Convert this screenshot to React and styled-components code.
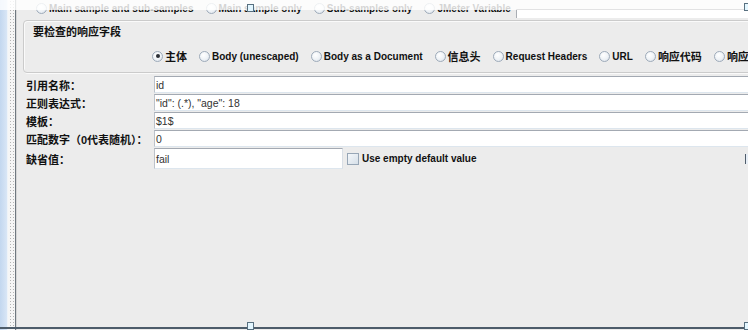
import React from "react";
import styled, { createGlobalStyle } from "styled-components";

const GlobalStyle = createGlobalStyle`
  html, body { margin: 0; padding: 0; width: 748px; height: 330px; overflow: hidden; background: #ececec; }
  #root { width: 748px; height: 330px; }
`;

const FONT = `"Liberation Sans", "Noto Sans CJK SC", sans-serif`;

const Screen = styled.div`
  position: relative;
  display: flex;
  width: 748px;
  height: 330px;
  overflow: hidden;
  background: #ececec;
  font-family: ${FONT};
  color: #111;
`;

const BlueStrip = styled.div`
  flex: none;
  width: 7px;
  background: linear-gradient(to right, #c3d7ef, #d9e6f6);
  border-right: 1px solid #eef3f9;
`;

const DotStrip = styled.div`
  flex: none;
  width: 7px;
  background-color: #f6f6f6;
  background-image: radial-gradient(#b5b5b5 0.7px, transparent 0.9px);
  background-size: 3px 3px;
  background-position: 1px 0;
`;

const DarkLine = styled.div`
  flex: none;
  width: 1px;
  background: #6f7880;
  border-right: 1px solid #d6d6d6;
`;

const Panel = styled.div`
  flex: 1;
  min-width: 0;
  display: flex;
  flex-direction: column;
  overflow: hidden;
`;

const ApplyRow = styled.div`
  display: flex;
  align-items: center;
  height: 18px;
  padding: 0 0 2px 19px;
  box-sizing: border-box;
  gap: 12px;
  white-space: nowrap;
`;

const RadioItem = styled.label`
  display: flex;
  align-items: center;
  gap: 2px;
  font-size: ${(p) => (p.$cjk ? "11px" : "10px")};
  font-weight: bold;
  white-space: nowrap;
  flex: none;
`;

const RadioDot = styled.span`
  position: relative;
  flex: none;
  width: 11px;
  height: 11px;
  box-sizing: border-box;
  border-radius: 50%;
  border: 1px solid #9eabba;
  background: radial-gradient(circle at 40% 35%, #ffffff 0%, #eef2f6 55%, #d3dbe4 100%);
  &::after {
    content: "";
    display: ${(p) => (p.$on ? "block" : "none")};
    position: absolute;
    left: 2.5px;
    top: 2.5px;
    width: 4px;
    height: 4px;
    border-radius: 50%;
    background: #2b2f36;
  }
`;

const VarField = styled.div`
  flex: 1;
  align-self: flex-end;
  height: 8px;
  margin: 0 -6px -2px -7px;
  background: #fff;
  border-top: 1px solid #5d6166;
  border-left: 1px solid #a9adb3;
`;

const GroupBox = styled.fieldset`
  margin: 2px -20px 0 6px;
  padding: 5px 0 0 9px;
  height: 53px;
  box-sizing: border-box;
  border: 1px solid #cbcbcb;
  border-radius: 4px;
  box-shadow: inset 1px 1px 0 #fafafa, 1px 1px 0 #fafafa;
  min-width: 0;
`;

const GroupTitle = styled.div`
  font-size: 11px;
  font-weight: bold;
  line-height: 12px;
  height: 12px;
`;

const ChoiceRow = styled.div`
  display: flex;
  align-items: center;
  gap: 12px;
  margin-top: 11px;
  padding-left: 119px;
  height: 14px;
`;

const Form = styled.div`
  display: flex;
  flex-direction: column;
  gap: 1px;
  margin-top: 3px;
  padding-left: 9px;
`;

const Row = styled.div`
  display: flex;
  align-items: center;
  height: ${(p) => p.$h || 17}px;
`;

const Label = styled.div`
  flex: none;
  width: 128px;
  font-size: 11px;
  font-weight: bold;
  white-space: nowrap;
`;

const Field = styled.div`
  flex: ${(p) => (p.$w ? "none" : "1")};
  width: ${(p) => (p.$w ? `${p.$w}px` : "auto")};
  height: 100%;
  box-sizing: border-box;
  margin-right: ${(p) => (p.$w ? "0" : "-6px")};
  background: #fff;
  border-top: 1px solid #a3a9b2;
  border-left: 1px solid #bcc2ca;
  border-right: 1px solid #d9dfe6;
  border-bottom: 1px solid #dde6ee;
  padding-left: 1px;
  display: flex;
  align-items: center;
  font-size: 10.5px;
  color: #333;
  white-space: nowrap;
`;

const CheckBox = styled.span`
  flex: none;
  width: 12px;
  height: 12px;
  box-sizing: border-box;
  margin-left: 4px;
  border: 1px solid #97a6b6;
  background: linear-gradient(135deg, #f4f7fa, #d6dfe8);
`;

const CheckLabel = styled.span`
  margin-left: 3px;
  font-size: 10px;
  font-weight: bold;
  white-space: nowrap;
`;

const EdgeBit = styled.span`
  margin-left: auto;
  margin-right: -1px;
  width: 3px;
  height: 10px;
  border-left: 1px solid #4f5d6b;
  background: #e7eef6;
`;

const TopVeil = styled.div`
  position: absolute;
  left: 0;
  top: 0;
  width: 100%;
  height: 10px;
  background: rgba(255, 255, 255, 0.82);
`;

const BottomEdge = styled.div`
  position: absolute;
  left: 0;
  bottom: 1px;
  width: 100%;
  height: 2px;
  background: #4d5c6a;
`;

const Handle = styled.div`
  position: absolute;
  left: ${(p) => p.$x}px;
  top: ${(p) => p.$y}px;
  width: 7px;
  height: 8px;
  box-sizing: border-box;
  border: 1px solid #587080;
  background: #e3f6ff;
`;

const applyOptions = [
  "Main sample and sub-samples",
  "Main sample only",
  "Sub-samples only",
  "JMeter Variable",
];

const fieldOptions = [
  { t: "主体", cjk: true, on: true },
  { t: "Body (unescaped)" },
  { t: "Body as a Document" },
  { t: "信息头", cjk: true },
  { t: "Request Headers" },
  { t: "URL" },
  { t: "响应代码", cjk: true },
  { t: "响应信息", cjk: true },
];

const rows = [
  { label: "引用名称：", value: "id" },
  { label: "正则表达式：", value: '"id": (.*), "age": 18' },
  { label: "模板：", value: "$1$" },
  { label: "匹配数字（0代表随机）：", value: "0" },
];

export default function App() {
  return (
    <Screen>
      <GlobalStyle />
      <BlueStrip />
      <DotStrip />
      <DarkLine />
      <Panel>
        <ApplyRow>
          {applyOptions.map((o) => (
            <RadioItem key={o}>
              <RadioDot />
              {o}
            </RadioItem>
          ))}
          <VarField />
        </ApplyRow>
        <GroupBox>
          <GroupTitle>要检查的响应字段</GroupTitle>
          <ChoiceRow>
            {fieldOptions.map((o) => (
              <RadioItem key={o.t} $cjk={o.cjk}>
                <RadioDot $on={o.on} />
                {o.t}
              </RadioItem>
            ))}
          </ChoiceRow>
        </GroupBox>
        <Form>
          {rows.map((r) => (
            <Row key={r.label}>
              <Label>{r.label}</Label>
              <Field>{r.value}</Field>
            </Row>
          ))}
          <Row $h={21}>
            <Label>缺省值：</Label>
            <Field $w={189}>fail</Field>
            <CheckBox />
            <CheckLabel>Use empty default value</CheckLabel>
            <EdgeBit />
          </Row>
        </Form>
      </Panel>
      <TopVeil />
      <BottomEdge />
      <Handle $x={247} $y={4} />
      <Handle $x={247} $y={322} />
      <Handle $x={744} $y={3} />
      <Handle $x={744} $y={322} />
    </Screen>
  );
}
